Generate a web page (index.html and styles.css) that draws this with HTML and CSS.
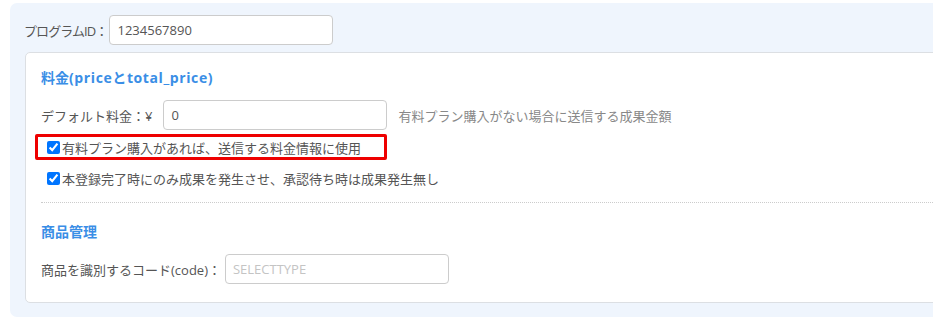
FILE: index.html
```html
<!DOCTYPE html>
<html lang="ja">
<head>
    <meta charset="UTF-8">
    <meta name="viewport" content="width=device-width, initial-scale=1.0">
    <title>成果設定</title>
    <link rel="stylesheet" href="styles.css">
</head>
<body>

    <div class="panel">
        <!-- プログラムID -->
        <div class="field-row">
            <label class="field-label label-id">プログラムID：</label>
            <input type="text" class="text-input" value="1234567890">
        </div>

        <div class="card">
            <!-- 料金 -->
            <h3 class="section-title">料金<span class="latin">(priceとtotal_price)</span></h3>
            <div class="field-row">
                <label class="field-label">デフォルト料金：<span class="yen">¥</span></label>
                <input type="text" class="text-input" value="0">
                <span class="help-text">有料プラン購入がない場合に送信する成果金額</span>
            </div>

            <div class="check-list">
                <label class="check-row highlight">
                    <input type="checkbox" checked>有料プラン購入があれば、送信する料金情報に使用
                </label>
                <label class="check-row">
                    <input type="checkbox" checked>本登録完了時にのみ成果を発生させ、承認待ち時は成果発生無し
                </label>
            </div>

            <hr class="divider">

            <!-- 商品管理 -->
            <h3 class="section-title">商品管理</h3>
            <div class="field-row">
                <label class="field-label label-code">商品を識別するコード(code)：</label>
                <input type="text" class="text-input" placeholder="SELECTTYPE">
            </div>
        </div>
    </div>

</body>
</html>
```

FILE: styles.css
```css
/* 基本 */
body {
    margin: 0;
    font-family: "Open Sans", "Noto Sans CJK JP", sans-serif;
    font-size: 13px;
    color: #555;
    background: #fff;
    overflow: hidden;
}

/* 外側パネル */
.panel {
    margin: 3px 0 0 10px;
    width: 960px;
    padding: 12px 0 14px 14px;
    background: #eff5fd;
    border-radius: 7px;
}

/* 行 */
.field-row {
    display: flex;
    align-items: center;
    height: 30px;
}

.field-label {
    white-space: nowrap;
    margin-right: 2px;
}

.label-id {
    letter-spacing: -0.9px;
}

.label-code {
    margin-right: 4px;
}

.yen {
    margin-right: 9px;
}

.text-input {
    box-sizing: border-box;
    width: 224px;
    height: 30px;
    padding: 0 7px;
    border: 1px solid #ccc;
    border-radius: 4px;
    font-family: inherit;
    font-size: 13px;
    color: #555;
    outline: none;
}

.text-input::placeholder {
    color: #c4c4c4;
}

.help-text {
    margin-left: 11px;
    color: #888;
    white-space: nowrap;
}

/* カード */
.card {
    margin: 7px 0 0 1px;
    padding: 15px 0 18px 15px;
    background: #fff;
    border: 1px solid #dcdfe3;
    border-radius: 5px;
}

.section-title {
    margin: 0 0 12px;
    height: 20px;
    line-height: 20px;
    font-size: 14px;
    font-weight: bold;
    color: #3a8ee6;
}

.section-title .latin {
    letter-spacing: 0.6px;
}

/* チェックボックス */
.check-list {
    display: flex;
    flex-direction: column;
    align-items: flex-start;
    gap: 5px;
    margin: 4px 0 0 -6px;
}

.check-row {
    display: flex;
    align-items: center;
    height: 20px;
    padding: 0 9px 0 9px;
    border: 3px solid transparent;
    border-radius: 2px;
    white-space: nowrap;
}

.check-row input {
    width: 13px;
    height: 13px;
    margin: 0 2px 0 0;
}

.check-row.highlight {
    border-color: #ee0000;
    padding-right: 23px;
}

/* 区切り */
.divider {
    margin: 11px 0 19px;
    border: none;
    border-top: 1px dotted #ccc;
}
```
